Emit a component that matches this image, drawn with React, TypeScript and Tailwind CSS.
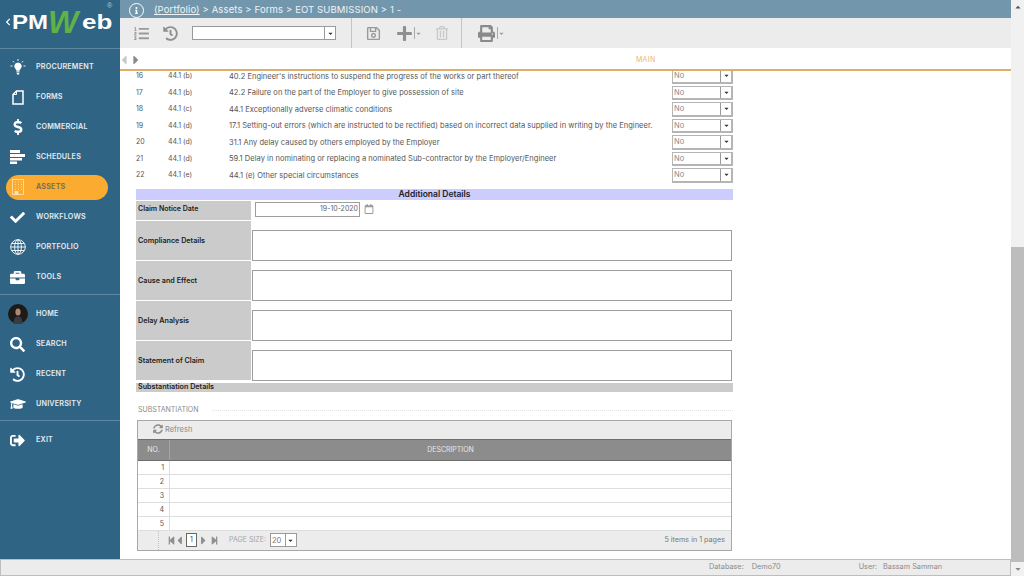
import type { ReactNode } from "react";
import { FaBriefcase, FaCheck, FaDollarSign, FaGraduationCap, FaHistory, FaListOl, FaPrint, FaRegCalendar, FaRegSave, FaSearch, FaSignOutAlt, FaSyncAlt, FaRegTrashAlt, FaStepBackward, FaStepForward, FaCaretLeft, FaCaretRight, FaCaretDown, FaCaretUp, FaPlus, FaChevronLeft, FaInfo } from "react-icons/fa";

const font = "font-['Inter','Liberation_Sans',sans-serif]";
const logoFont = "font-['Liberation_Sans',sans-serif]";

// ── Sidebar icons that the packages don't have ──
function BulbIcon() {
  return (
    <svg width="16" height="16" viewBox="0 0 16 16" fill="white">
      <path d="M8 3.500a3.800 3.800 0 0 0-2.300 6.800c.5.4.7.9.7 1.400h3.200c0-.5.2-1 .7-1.400A3.800 3.800 0 0 0 8 3.500z" />
      <rect x="6.400" y="12.300" width="3.200" height="1.100" />
      <rect x="6.800" y="14" width="2.400" height="1.500" />
      <path d="M8 0v2M2.800 2l1.300 1.400M13.200 2l-1.300 1.400M.5 7h2M13.500 7h2" stroke="white" strokeWidth="0.900" fill="none" />
    </svg>
  );
}

function FormIcon() {
  return (
    <svg width="12" height="15" viewBox="0 0 12 15" fill="none" stroke="white" strokeWidth="1.500">
      <path d="M4.500 1h6.500v13H1V4.500z" />
      <path d="M4.500 1v3.500H1" strokeWidth="1" />
    </svg>
  );
}

function GlobeIcon() {
  return (
    <svg width="16" height="16" viewBox="0 0 16 16" fill="none" stroke="white" strokeWidth="0.900">
      <circle cx="8" cy="8" r="7.300" />
      <ellipse cx="8" cy="8" rx="3.400" ry="7.300" />
      <path d="M8 .7v14.600M.7 8h14.600M1.700 4.500h12.600M1.700 11.500h12.600" />
    </svg>
  );
}

function SchedulesIcon() {
  return (
    <svg width="16" height="14" viewBox="0 0 16 14" fill="white">
      <rect x="0" y="0" width="10" height="3" />
      <rect x="0" y="4" width="15" height="3" />
      <rect x="0" y="8" width="12" height="2.500" />
      <rect x="0" y="11.500" width="7" height="2.500" />
    </svg>
  );
}

function AssetsIcon() {
  return (
    <svg width="12" height="16" viewBox="0 0 12 16" fill="none" stroke="#fde3b8" strokeWidth="0.800">
      <rect x="0.500" y="0.500" width="11" height="15" />
      <path d="M3 3h1M6 3h1M9 3h1M3 5.500h1M6 5.500h1M9 5.500h1M3 8h1M6 8h1M9 8h1M3 10.500h1M6 10.500h1M9 10.500h1" />
      <rect x="3" y="12.500" width="3" height="3" fill="#fde3b8" />
    </svg>
  );
}

function Avatar() {
  return (
    <svg width="20" height="20" viewBox="0 0 20 20">
      <circle cx="10" cy="10" r="10" fill="#1d1a18" />
      <ellipse cx="10" cy="8" rx="2.600" ry="3.600" fill="#a98a72" />
      <path d="M5.500 20c0-6 2-7.500 4.500-7.500s4.500 1.500 4.500 7.500z" fill="#3a3b40" />
    </svg>
  );
}

type NavItem = { label: string; icon: ReactNode; active?: boolean };

const navMain: NavItem[] = [
  { label: "Procurement", icon: <BulbIcon /> },
  { label: "Forms", icon: <FormIcon /> },
  { label: "Commercial", icon: <FaDollarSign size={16} color="white" /> },
  { label: "Schedules", icon: <SchedulesIcon /> },
  { label: "Assets", icon: <AssetsIcon />, active: true },
  { label: "Workflows", icon: <FaCheck size={15} color="white" /> },
  { label: "Portfolio", icon: <GlobeIcon /> },
  { label: "Tools", icon: <FaBriefcase size={15} color="white" /> },
];

const navUser: NavItem[] = [
  { label: "Home", icon: <Avatar /> },
  { label: "Search", icon: <FaSearch size={15} color="white" /> },
  { label: "Recent", icon: <FaHistory size={15} color="white" /> },
  { label: "University", icon: <FaGraduationCap size={16} color="white" /> },
];

const navExit: NavItem[] = [{ label: "Exit", icon: <FaSignOutAlt size={15} color="white" /> }];

const claimRows = [
  { no: "16", ref: "44.1 (b)", text: "40.2 Engineer's instructions to suspend the progress of the works or part thereof" },
  { no: "17", ref: "44.1 (b)", text: "42.2 Failure on the part of the Employer to give possession of site" },
  { no: "18", ref: "44.1 (c)", text: "44.1 Exceptionally adverse climatic conditions" },
  { no: "19", ref: "44.1 (d)", text: "17.1 Setting-out errors (which are instructed to be rectified) based on incorrect data supplied in writing by the Engineer." },
  { no: "20", ref: "44.1 (d)", text: "31.1 Any delay caused by others employed by the Employer" },
  { no: "21", ref: "44.1 (d)", text: "59.1 Delay in nominating or replacing a nominated Sub-contractor by the Employer/Engineer" },
  { no: "22", ref: "44.1 (e)", text: "44.1 (e) Other special circumstances" },
];

function NavRow({ item }: { item: NavItem }) {
  return (
    <div className="h-[30px] flex items-center">
      <div className={`flex items-center h-[25px] w-[102px] ml-[6px] rounded-full ${item.active ? "bg-[#fbab2f]" : ""}`}>
        <div className="w-[23px] flex justify-center">{item.icon}</div>
        <span className={`ml-[7px] text-[7.200px] font-semibold uppercase tracking-[0.2px] ${item.active ? "text-[#6f6a5c]" : "text-[#e4ebef]"}`}>
          {item.label}
        </span>
      </div>
    </div>
  );
}

function Logo() {
  return (
    <div className={`h-[49px] border-b border-[#5d87a0] flex items-center pl-[4px] pb-[4px] ${logoFont}`}>
      <FaChevronLeft size={8} color="white" />
      <span className="w-[36px] inline-block origin-left scale-x-[1.2] text-[20px] font-bold text-white leading-none">PM</span>
      <span className="w-[34px] text-[32px] font-bold italic text-[#5fb246] leading-none">W</span>
      <span className="w-[30px] inline-block origin-left scale-x-[1.3] text-[20px] font-bold text-white leading-none">eb</span>
      <span className="self-start mt-[2px] -ml-[5px] text-[7px] text-[#b9c9d4] leading-none">®</span>
    </div>
  );
}

function Sidebar() {
  return (
    <aside className="w-[120px] shrink-0 bg-[#306485] flex flex-col">
      <Logo />
      <div className="pt-[3px] h-[246px] border-b border-[#5d87a0]">
        {navMain.map((item) => <NavRow key={item.label} item={item} />)}
      </div>
      <div className="pt-[4px] h-[126px] border-b border-[#5d87a0]">
        {navUser.map((item) => <NavRow key={item.label} item={item} />)}
      </div>
      <div className="pt-[4px]">
        {navExit.map((item) => <NavRow key={item.label} item={item} />)}
      </div>
    </aside>
  );
}

function Toolbar() {
  return (
    <div className="h-[30px] bg-[#ececec] flex items-center text-[#8a8a8a]">
      <div className="w-[14px]" />
      <FaListOl size={15} color="#9a9a9a" />
      <div className="ml-[14px]"><FaHistory size={15} color="#8f8f8f" /></div>
      <div className="ml-[14px] w-[144px] h-[14px] bg-white border border-[#9a9a9a] flex justify-end">
        <div className="w-[11px] border-l border-[#9a9a9a] flex items-center justify-center"><FaCaretDown size={7} color="#333" /></div>
      </div>
      <div className="ml-[15px] h-[30px] border-l border-[#c4c4c4]" />
      <div className="ml-[14px]"><FaRegSave size={15} color="#9a9a9a" /></div>
      <div className="ml-[15px] flex items-center"><FaPlus size={17} color="#8f8f8f" /><div className="ml-[1px] h-[12px] border-l border-[#aaa]" /><FaCaretDown size={7} color="#9a9a9a" /></div>
      <div className="ml-[13px]"><FaRegTrashAlt size={14} color="#c8c8c8" /></div>
      <div className="ml-[12px] h-[30px] border-l border-[#c4c4c4]" />
      <div className="ml-[16px] flex items-center"><FaPrint size={17} color="#8a8a8a" /><div className="ml-[2px] h-[12px] border-l border-[#aaa]" /><FaCaretDown size={7} color="#9a9a9a" /></div>
    </div>
  );
}

function ClaimRow({ no, ref: refNo, text }: { no: string; ref: string; text: string }) {
  return (
    <div className="h-[16.500px] flex items-center text-[#555]">
      <span className="w-[32px]">{no}</span>
      <span className="w-[61px]">{refNo}</span>
      <span className="w-[443px] whitespace-nowrap text-[7.500px] tracking-[0.03px]">{text}</span>
      <div className="w-[61px] h-[14.500px] border-2 border-t-[1px] border-l-[1px] border-[#b5b5b5] bg-white flex items-center">
        <span className="flex-1 pl-[1px] text-[#8a8a8a] text-[7.500px]">No</span>
        <div className="w-[11px] h-full border-l border-[#9a9a9a] flex items-center justify-center"><FaCaretDown size={7} color="#333" /></div>
      </div>
    </div>
  );
}

function DetailRow({ label }: { label: string }) {
  return (
    <div className="flex h-[40.200px]">
      <div className="w-[115px] bg-[#cbcbcb] border-b border-white flex items-center pl-[2px] pt-[2px] font-semibold text-[#222] text-[7.200px]">{label}</div>
      <div className="flex-1 pl-[1px] flex items-end">
        <div className="w-[480px] h-[31px] border border-[#9e9e9e] bg-white" />
      </div>
    </div>
  );
}

function SubstantiationGrid() {
  return (
    <div className="ml-[1px] w-[595px] h-[131px] border border-[#a8a8a8] flex flex-col text-[#555]">
      <div className="h-[18px] shrink-0 bg-[#ececec] flex items-center pl-[15px] pb-[2px] text-[#8a8a8a]">
        <FaSyncAlt size={10} color="#8f8f8f" />
        <span className="ml-[2px] text-[7.500px]">Refresh</span>
      </div>
      <div className="h-[22px] shrink-0 bg-[#8c8c8c] border-y border-[#6e6e6e] flex items-center text-[#e8e8e8]">
        <span className="w-[32px] text-center border-r border-[#a5a5a5] h-full flex items-center justify-center">NO.</span>
        <span className="flex-1 text-center">DESCRIPTION</span>
      </div>
      {["1", "2", "3", "4", "5"].map((n) => (
        <div key={n} className="h-[13.900px] shrink-0 flex border-b border-[#dedede]">
          <span className="w-[32px] text-right pr-[5px] border-r border-[#dedede] leading-[13px]">{n}</span>
        </div>
      ))}
      <div className="flex-1 bg-[#ececec] flex items-center text-[#a5a5a5]">
        <div className="w-[21px] h-full border-r border-dotted border-[#c4c4c4]" />
        <div className="ml-[8px]"><FaStepBackward size={9} color="#8f8f8f" /></div>
        <div className="-ml-[3px]"><FaCaretLeft size={13} color="#8f8f8f" /></div>
        <div className="w-[11px] h-[14px] border border-[#666] bg-white text-[#444] flex items-center justify-center">1</div>
        <FaCaretRight size={13} color="#8f8f8f" />
        <FaStepForward size={9} color="#8f8f8f" />
        <span className="ml-[10px] text-[7px]">PAGE SIZE:</span>
        <div className="ml-[4px] w-[27px] h-[14px] border border-[#9a9a9a] bg-white flex items-center">
          <span className="flex-1 pl-[1px] text-[#777] text-[7.500px]">20</span>
          <div className="w-[11px] h-full border-l border-[#9a9a9a] flex items-center justify-center"><FaCaretDown size={7} color="#333" /></div>
        </div>
        <span className="ml-auto pr-[6px] text-[#777] text-[7.200px]">5 items in 1 pages</span>
      </div>
    </div>
  );
}

function Form() {
  return (
    <div className={`flex-1 overflow-hidden bg-white pl-[16px] text-[7px] ${font}`}>
      <div className="w-[597px] -mt-[3px]">
        {claimRows.map((r) => <ClaimRow key={r.no} no={r.no} ref={r.ref} text={r.text} />)}
        <div className="mt-[5px] h-[11px] bg-[#ccccff] flex items-center justify-center text-[8.500px] font-semibold text-[#222]">Additional Details</div>
        <div className="mt-[1px] flex h-[20px]">
          <div className="w-[115px] bg-[#cbcbcb] border-b border-white flex items-center pl-[2px] pb-[1px] font-semibold text-[#222]">Claim Notice Date</div>
          <div className="ml-[4px] mt-[1px] w-[105px] h-[15px] border border-[#9e9e9e] flex items-center justify-end pr-[1px] text-[#666]">19-10-2020</div>
          <div className="ml-[4px] mt-[3px]"><FaRegCalendar size={10} color="#999" /></div>
        </div>
        <DetailRow label="Compliance Details" />
        <DetailRow label="Cause and Effect" />
        <DetailRow label="Delay Analysis" />
        <DetailRow label="Statement of Claim" />
        <div className="mt-[2px] h-[9px] bg-[#cbcbcb] flex items-center pl-[2px] font-semibold text-[#222] text-[7.200px]">Substantiation Details</div>
        <div className="mt-[13px] mb-[5px] ml-[2px] h-[10px] flex items-center text-[#8a8a8a]">
          SUBSTANTIATION
          <div className="flex-1 ml-[14px] border-t border-dotted border-[#e2e2e2]" />
        </div>
        <SubstantiationGrid />
      </div>
    </div>
  );
}

export default function App() {
  return (
    <div className={`w-[1024px] h-[576px] overflow-hidden flex bg-white ${font}`}>
      <div className="flex-1 flex flex-col min-w-0">
        <div className="flex-1 flex min-h-0">
          <Sidebar />
          <main className="flex-1 flex flex-col min-w-0">
            <div className="h-[18px] bg-[#7297ad] flex items-center pl-[9px] pt-[2px] text-[#eef3f6] text-[9.500px]">
              <div className="w-[15px] h-[15px] rounded-full border border-white flex items-center justify-center"><FaInfo size={7} color="white" /></div>
              <span className="ml-[10px] tracking-[0.12px]"><span className="underline">(Portfolio)</span> &gt; Assets &gt; Forms &gt; EOT SUBMISSION &gt; 1 -</span>
            </div>
            <Toolbar />
            <div className="h-[23px] pt-[3px] border-b-2 border-[#e0ad69] flex items-center">
              <div className="-ml-[3px]"><FaCaretLeft size={14} color="#c8c8c8" /></div>
              <div className="-ml-[2.500px]"><FaCaretRight size={14} color="#8a8a8a" /></div>
              <span className="ml-[493.500px] text-[7px] text-[#e9b67c] tracking-[0.3px]">MAIN</span>
            </div>
            <Form />
          </main>
        </div>
        <div className="h-[17px] bg-[#ececec] border border-[#bdbdbd] flex items-center text-[7.300px] text-[#8a8a8a]">
          <span className="ml-[708px]">Database:</span>
          <span className="ml-[8px]">Demo70</span>
          <span className="ml-[78px]">User:</span>
          <span className="ml-[6px]">Bassam Samman</span>
        </div>
      </div>
      <div className="w-[13px] shrink-0 bg-[#f1f1f1] flex flex-col items-center">
        <div className="h-[14px] flex items-center"><FaCaretUp size={8} color="#555" /></div>
        <div className="h-[233px]" />
        <div className="w-full h-[315px] bg-[#bdbdbd]" />
        <div className="flex-1 flex items-center"><FaCaretDown size={8} color="#888" /></div>
      </div>
    </div>
  );
}
